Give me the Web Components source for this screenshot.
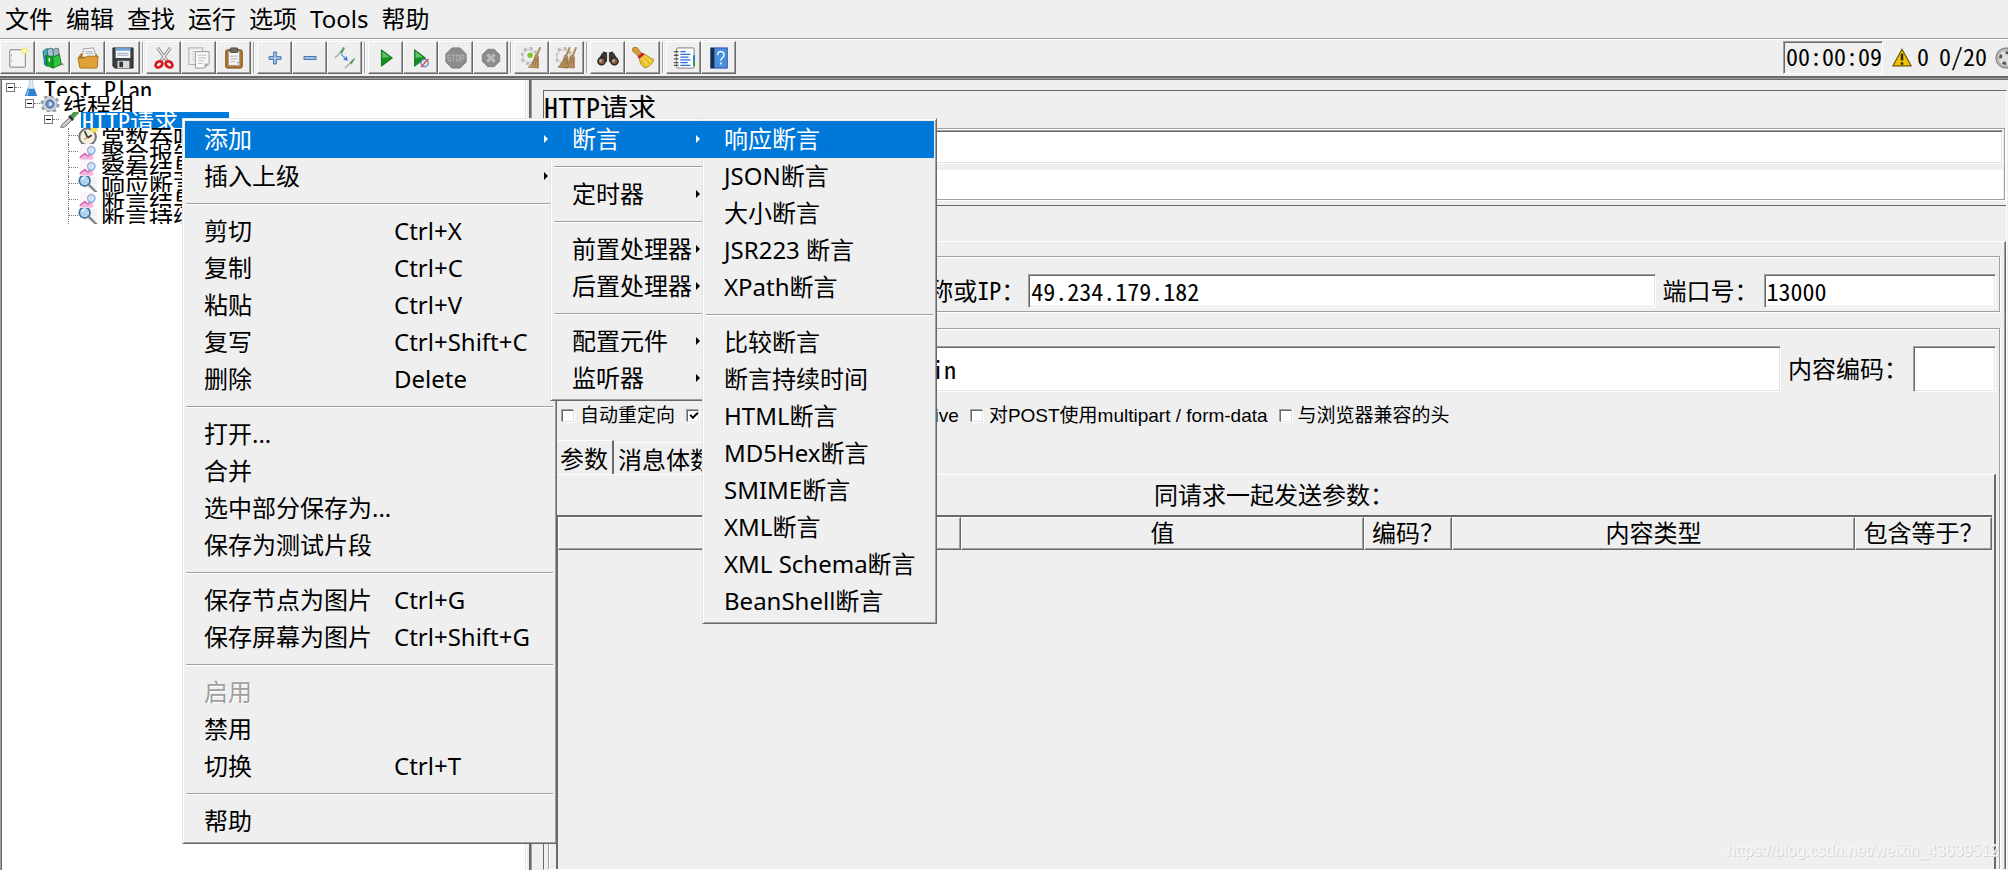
<!DOCTYPE html>
<html lang="zh-CN">
<head>
<meta charset="utf-8">
<title>JMeter</title>
<style>
  html, body { margin: 0; height: 100%; }
  body {
    background: #efefef; color: #000; overflow: hidden;
    --face: #efefef; --dark: #696969; --mid: #a0a0a0; --light: #e3e3e3; --sel: #0078d7;
    --ui: "Noto Sans", "Noto Sans CJK SC", sans-serif;
    --song: "Noto Sans Mono CJK SC", "Noto Sans CJK SC", "Liberation Mono", monospace;
    font: 24px/32px var(--ui);
  }
</style>
</head>
<body>
<jm-window></jm-window>
<script>
const define = (name, css, html, setup) => {
  customElements.define(name, class extends HTMLElement {
    connectedCallback() {
      if (this.shadowRoot) return;
      const root = this.attachShadow({ mode: 'open' });
      const t = document.createElement('template');
      t.innerHTML = `<style>*{box-sizing:border-box}${css}</style>` + (typeof html === 'function' ? html(this) : html);
      root.append(t.content.cloneNode(true));
      if (setup) setup(this, root);
    }
  });
};

const gear = (x, y, r, c, s) => `<g transform="translate(${x} ${y})"><circle r="${r}" fill="none" stroke="${s}" stroke-width="4" stroke-dasharray="${r*0.42} ${r*0.365}"/><circle r="${r-1}" fill="${c}" stroke="${s}"/></g>`;
const broom = '<path d="M20 0l2 .5-4 10-2-1z" fill="#b08a50"/><path d="M15.500 9l3.500 1.500 0 12.500-11-1c4-3 6-7 7.500-13z" fill="#c49a62" stroke="#8a6334" stroke-width=".7"/><path d="M16 11l-4 11M17 12l-2 10M18 12v10" stroke="#8a6334" stroke-width=".7"/>';
const ICONS = {
  new: '<rect x="3" y="3" width="17" height="19" rx="1" fill="#f4f4f4" stroke="#777"/><path d="M5 8v2M5 14v2" stroke="#999"/><circle cx="19" cy="4" r="3.500" fill="#f6ea70"/><circle cx="19" cy="4" r="1.500" fill="#fff"/>',
  templates: '<path d="M1 5q3-4 6-3l0 12-4 3z" fill="#4aa7b8" stroke="#1d6b80"/><path d="M6 3q3-3 6-1l1 7-7 3z" fill="#9fc4cb" stroke="#3b7078"/><path d="M12 3q3-3 6-1l1 8-6 3z" fill="#9fb4bb" stroke="#5b7078"/><path d="M2 9l4 2v11l-4-3z" fill="#2b7fa0"/><path d="M5 9l7 2v12l-7-3z" fill="#15a428" stroke="#0b7a1b"/><path d="M12 11l7-3 2 11-9 4z" fill="#2fc63c" stroke="#0b7a1b"/><path d="M8 12v4" stroke="#fff" stroke-width="1.500"/><path d="M20 20l4-1-3-2z" fill="#777"/>',
  open: '<path d="M2 10l2-3h4l14 1v13H3z" fill="#b87a1a"/><path d="M6 9l1-7 11-1 3 10H6z" fill="#f4f4f4" stroke="#999"/><path d="M9 5h8M9 7h9" stroke="#aaa"/><path d="M1 12h8l2-2h12l-1 12q0 1-1 1H4q-1 0-1-1z" fill="#e0a238" stroke="#a56b12"/>',
  save: '<path d="M1 1h22v22H3l-2-2z" fill="#3b3e42" stroke="#222"/><rect x="4" y="1" width="16" height="11" fill="#eef4fa"/><path d="M4 1h16v3H4z" fill="#6e9fd0"/><path d="M6 7h12M6 9h12" stroke="#9ab"/><rect x="6" y="15" width="13" height="8" fill="#d8d8d8"/><rect x="8" y="16" width="4" height="6" fill="#333"/>',
  cut: '<path d="M5 1l11 15M19 1L8 16" stroke="#888" stroke-width="3.500"/><path d="M5 1l11 15M19 1L8 16" stroke="#eee" stroke-width="1.500"/><ellipse cx="6.500" cy="19" rx="4" ry="3" fill="none" stroke="#d8181f" stroke-width="3" transform="rotate(-35 6.500 19)"/><ellipse cx="17.500" cy="19" rx="4" ry="3" fill="none" stroke="#d8181f" stroke-width="3" transform="rotate(35 17.500 19)"/>',
  copy: '<rect x="1" y="1" width="15" height="18" fill="#f2f2f2" stroke="#a5a5a5"/><path d="M4 5h9M4 8h3M4 11h3M4 14h3" stroke="#c8c8c8"/><path d="M8 5h15v13l-5 5H8z" fill="#f8f8f8" stroke="#929292"/><path d="M11 9h9M11 12h9M11 15h7M11 18h5" stroke="#bbb"/><path d="M18 23v-5h5z" fill="#aaa"/>',
  paste: '<rect x="3" y="3" width="18" height="20" rx="2" fill="#b87a2a" stroke="#6e4312"/><rect x="6" y="5" width="12" height="15" fill="#f6f6f4" stroke="#999"/><path d="M8 10h8M8 13h8M8 16h5" stroke="#aaa"/><rect x="8" y="1" width="8" height="5" rx="1" fill="#6b6b62" stroke="#444"/><path d="M18 20v-4h-4z" fill="#bbb"/>',
  plus: '<path d="M10.500 5.500h3v5h5v3h-5v5h-3v-5h-5v-3h5z" fill="#a8c8ec" stroke="#3268a8"/>',
  minus: '<rect x="5.500" y="10.500" width="13" height="3" fill="#a8c8ec" stroke="#3268a8"/>',
  toggle: '<path d="M1 12L8 5" stroke="#aaa" stroke-width="1.500"/><path d="M6 6l4-6 2 1-3 6z" fill="#5f9f63"/><path d="M12 23l7-7" stroke="#aaa" stroke-width="1.500"/><path d="M17 17l5-5 1 1-4 6z" fill="#5f9f63"/><path d="M8 8l5 5" fill="none" stroke="#2a78e0" stroke-width="1.500" stroke-dasharray="2 1"/><path d="M15 15l-5-1 4-4z" fill="#2a78e0"/>',
  start: '<path d="M7 3l12 9-12 9z" fill="#159024" stroke="#0d6d18"/><path d="M8 5l8 6-8 1z" fill="#5fc068"/>',
  startnp: '<path d="M5 3l12 9-12 9z" fill="#159024" stroke="#0d6d18"/><path d="M6 5l8 6-8 1z" fill="#5fc068"/><circle cx="16" cy="17.500" r="4" fill="#dde9f8" stroke="#6a8fc8" stroke-width="1.500"/><path d="M12 22l8-9" stroke="#e04030" stroke-width="1.500"/>',
  stop: '<path d="M7.500 1h9l6.500 6.500v9L16.500 23h-9L1 16.500v-9z" fill="#8c8c8c" stroke="#7a7a7a"/><path d="M6 9H3v3h3v3H3M7 9h4M9 9v6M12.500 9h3v6h-3zM17.500 15.500V9h3v3.500h-3" fill="none" stroke="#a9a9a9" stroke-width="1.500"/>',
  shutdown: '<path d="M8.500 2.500h7L21.500 8.500v7L15.500 21.500h-7L2.500 15.500v-7z" fill="#8c8c8c" stroke="#7f7f7f"/><path d="M8 8l8 8M16 8l-8 8" stroke="#b9b9b9" stroke-width="3.500"/>',
  clear: gear(9, 10, 8, '#eee', '#bcbcbc') + '<circle cx="10" cy="9" r="3" fill="#7cc828"/>' + broom,
  clearall: gear(8, 10, 8, '#eee', '#bcbcbc') + '<g transform="translate(-6)">' + broom + '</g><g transform="translate(1)">' + broom + '</g>',
  search: '<path d="M5 8l2-3 4 1v6H9zM19 8l-2-3-4 1v6h2z" fill="#333"/><path d="M1 15l4-8 6 3 0 6zM23 15l-4-8-6 3 0 6z" fill="#3a3a3a"/><circle cx="5" cy="15.500" r="4" fill="#8a5a3c" stroke="#222" stroke-width="1.500"/><circle cx="19" cy="15.500" r="4" fill="#8a5a3c" stroke="#222" stroke-width="1.500"/><circle cx="4" cy="15" r="1.500" fill="#c9b0a0"/><circle cx="18" cy="15" r="1.500" fill="#c9b0a0"/>',
  reset: '<path d="M1 1q3-2 5 0l5 7-3 3-7-6q-1-2 0-4z" fill="#d59a3a" stroke="#8f6218" stroke-width=".7"/><path d="M6 11l5-5 3 2-6 5z" fill="#c8202a"/><path d="M8 13l6-5q4 3 10 6-3 7-10 9-6-4-6-10z" fill="#f4cf3a" stroke="#a8861a"/><path d="M10 14l5 8M13 11l7 8" stroke="#c8a21e"/>',
  log: '<rect x="4" y="1" width="19" height="22" rx="1" fill="#fff" stroke="#777"/><path d="M8 5h6M8 8h11M8 11h9M8 14h11M8 17h8M8 20h11" stroke="#2a6fd8" stroke-width="1.500"/><path d="M1 5h5M1 9h5M1 13h5M1 17h5M1 20h5" stroke="#555" stroke-width="1.500"/><path d="M23 9v6" stroke="#2a6fd8" stroke-width="2"/><path d="M23 15v6" stroke="#18a030" stroke-width="2"/>',
  help: '<rect x="3" y="1" width="18" height="22" fill="#4a8fe0" stroke="#234f94"/><rect x="3" y="1" width="4" height="22" fill="#1c2f4a"/><path d="M10.500 9q0-4 3.500-4t3.500 3.500q0 2-2 3.500-1.500 1-1.500 3" fill="none" stroke="#fff" stroke-width="1.500"/><circle cx="14" cy="18" r="1.200" fill="#fff"/>',
  warn: '<path d="M12 1.500L23 21.500H1z" fill="#f5c400" stroke="#6b5a10" stroke-width="1.500"/><path d="M12 7v8M12 17v3" stroke="#332b00" stroke-width="3"/>',
  ring: '<circle cx="12" cy="12" r="11" fill="#b9b9b9" stroke="#6d6d6d"/><circle cx="12" cy="12" r="8" fill="#ddd"/><circle cx="12" cy="12" r="6" fill="none" stroke="#555" stroke-width="3" stroke-dasharray="4 5"/>',
  flask: '<path d="M10 1h4v7l5 13q0 2-2 2H7q-2 0-2-2l5-13z" fill="#dfe9f2" stroke="#b5c3d0"/><path d="M8 13h8l3 8q0 2-2 2H7q-2 0-2-2z" fill="#2f7fd0"/><path d="M9 15l-2 6" stroke="#9fd0ff" stroke-width="1.500"/>',
  cog: '<circle cx="12" cy="12" r="9.500" fill="none" stroke="#9ba1aa" stroke-width="4" stroke-dasharray="4 3.460"/><circle cx="12" cy="12" r="8.500" fill="#d8dce2" stroke="#9ba1aa"/><circle cx="12" cy="12" r="5" fill="#6f96cc" stroke="#3b4f78"/><path d="M11 9l4 3-4 3z" fill="#e8f2ff"/>',
  dropper: '<path d="M1 23l3-6 10-9 3 3-10 9z" fill="#c9cdd0" stroke="#555"/><path d="M12 7l5 5" stroke="#333" stroke-width="3"/><path d="M14 7l5-6q4-1 4 3l-6 6z" fill="#4aa04a" stroke="#2b6b2b"/>',
  timer: '<circle cx="11.500" cy="13" r="10" fill="#f3efdf" stroke="#76727e" stroke-width="2.500"/><path d="M11.500 14L8 6M11.500 14l5-3" stroke="#333" stroke-width="2"/><path d="M11.500 14l-4 2" stroke="#e0a040" stroke-width="2"/><circle cx="19.500" cy="4" r="4" fill="#f3e34a"/>',
  chart: '<path d="M2 0h17v24H2z" fill="#fdf5fa"/><path d="M2 21l6-6 4 3 6-6v9z" fill="#f3b5dc"/><path d="M2 19l6-5 4 3 5-5" fill="none" stroke="#cf4f9f" stroke-width="1.500"/><circle cx="16" cy="10" r="4.500" fill="#cfe6fa" stroke="#88a8cc" stroke-width="1.500"/>',
  lens: '<path d="M8 18h15V4H12z" fill="#f3f3f3"/><path d="M13 13l10 10" stroke="#888" stroke-width="3"/><circle cx="8" cy="8" r="6.500" fill="#a9d3f0" stroke="#3e7398" stroke-width="2"/><path d="M4.500 7q1-3 4-3" fill="none" stroke="#fff" stroke-width="1.500"/>'
};

define('jm-icon', ':host{display:block;width:24px;height:24px;flex:none}svg{display:block;width:100%;height:100%}',
  el => `<svg viewBox="0 0 24 24" aria-hidden="true">${ICONS[el.getAttribute('name')]}</svg>`);

define('jm-menubar', `
  :host{display:block;border-bottom:1px solid var(--mid);box-shadow:0 1px #fff;margin-bottom:1px}
  nav{display:flex;height:38px;align-items:center;gap:13px;padding-left:5px}
  button{all:unset;font:24px/32px var(--ui)}`,
  `<nav>${['文件','编辑','查找','运行','选项','Tools','帮助'].map(t => `<button>${t}</button>`).join('')}</nav>`);

define('jm-tool', `
  :host{display:block}
  button{display:grid;place-items:center;width:35px;height:33px;padding:0;background:var(--face);border:1px solid;
    border-color:#fff var(--dark) var(--dark) #fff;box-shadow:inset -1px -1px var(--mid)}
  jm-icon{width:22px;height:22px}`,
  el => `<button aria-label="${el.getAttribute('name')}"><jm-icon name="${el.getAttribute('name')}"></jm-icon></button>`);

define('jm-toolbar', `
  :host{display:flex;height:36px;padding-top:1px;align-items:flex-start;overflow:hidden}
  .g{display:flex}
  .g+.g{margin-left:6px;position:relative}
  .g+.g::before{content:"";position:absolute;left:-4px;top:1px;height:31px;width:2px;background:linear-gradient(90deg,var(--mid) 50%,#fff 50%)}
  .status{margin-left:auto;display:flex;align-items:center;height:33px;font:24px/28px var(--song)}
  .time{width:100px;height:33px;padding-left:2px;border:1px solid;border-color:var(--mid) #fff #fff var(--mid);box-shadow:inset 1px 1px var(--dark)}
  .status jm-icon{width:20px;height:20px;margin:0 5px 0 9px}
  .n{margin-right:10px}
  .n,.v{height:31px}
  .end{width:13px;height:22px;margin-left:8px;overflow:hidden}
  .end jm-icon{width:22px;height:22px;margin:0}`,
  [['new','templates','open','save'],['cut','copy','paste'],['plus','minus','toggle'],['start','startnp','stop','shutdown'],['clear','clearall'],['search','reset'],['log','help']]
    .map(g => `<div class="g">${g.map(n => `<jm-tool name="${n}"></jm-tool>`).join('')}</div>`).join('') +
  `<div class="status"><span class="time">00:00:09</span><jm-icon name="warn"></jm-icon><span class="n">0</span><span class="v">0/20</span><span class="end"><jm-icon name="ring"></jm-icon></span></div>`);

define('jm-node', `
  :host{display:flex;height:16px;overflow:hidden;padding-left:calc(4px + 19px * var(--level))}
  .x{width:15px;height:16px;flex:none;position:relative}
  .x.open::before{content:"";position:absolute;left:9px;right:0;top:7px;border-top:1px dotted #777}
  .x.leaf{margin-left:5px;width:10px;border-left:1px dotted #777}
  .x.leaf::before{content:"";position:absolute;left:0;right:0;top:7px;border-top:1px dotted #777}
  .box{position:absolute;left:0;top:3px;width:9px;height:9px;border:1px solid #777;background:linear-gradient(#000,#000) center/5px 1px no-repeat #fff}
  jm-icon{width:20px;height:20px;margin-top:-2px}
  .t{font:24px/17px var(--song);white-space:pre;margin-left:2px;padding:0 3px 0 1px;height:16px}
  :host([selected]) .t{background:var(--sel);color:#fff}`,
  el => `<span class="x ${el.hasAttribute('leaf') ? 'leaf' : 'open'}">${el.hasAttribute('leaf') ? '' : '<i class="box"></i>'}</span><jm-icon name="${el.getAttribute('icon')}"></jm-icon><span class="t"><slot></slot></span>`,
  el => el.style.setProperty('--level', el.getAttribute('level')));

define('jm-tree', `
  :host{display:block;background:#fff;border-left:1px solid var(--mid);box-shadow:inset 1px 0 var(--dark),1px 0 #fff;padding-left:1px;border-right:1px solid var(--light)}`,
  `<jm-node level="0" icon="flask">Test Plan</jm-node>
   <jm-node level="1" icon="cog">线程组</jm-node>
   <jm-node level="2" icon="dropper" selected>HTTP请求 one</jm-node>
   <jm-node level="3" leaf icon="timer">常数吞吐量定时器</jm-node>
   <jm-node level="3" leaf icon="chart">聚合报告</jm-node>
   <jm-node level="3" leaf icon="chart">察看结果树</jm-node>
   <jm-node level="3" leaf icon="lens">响应断言</jm-node>
   <jm-node level="3" leaf icon="chart">断言结果</jm-node>
   <jm-node level="3" leaf icon="lens">断言持续时间</jm-node>`);

define('jm-check', `
  :host{display:block}
  label{display:flex;align-items:center;gap:6px;font:19px/24px "Liberation Sans","Noto Sans CJK SC",sans-serif;white-space:nowrap}
  input{appearance:none;margin:0;width:12px;height:12px;background:#fff;border:1px solid;border-color:var(--dark) var(--light) var(--light) var(--dark);box-shadow:-1px -1px var(--mid),1px 1px #fff}
  input:checked{position:relative}
  input:checked::after{content:"";position:absolute;left:2px;top:1px;width:6px;height:3px;border:solid #000;border-width:0 0 2px 2px;transform:rotate(-45deg)}`,
  el => `<label><input type="checkbox" ${el.hasAttribute('checked') ? 'checked' : ''}><slot></slot></label>`);

define('jm-request', `
  :host{display:flex;flex-direction:column;border-left:2px solid var(--dark);box-shadow:inset 1px 0 var(--mid);padding:10px 1px 0 12px;font:24px/32px var(--song)}
  .frame{flex:1;display:flex;flex-direction:column;border:1px solid;border-color:var(--dark) #fff transparent var(--dark);min-width:0}
  h1{margin:0;font:400 28px/32px var(--song);height:37px}
  .etched{border:1px solid var(--mid);box-shadow:1px 1px #fff,inset 1px 1px #fff;min-width:0}
  input,select{font:24px/28px var(--song);color:#000;background:#fff;border:1px solid;border-radius:0;border-color:var(--mid) #fff #fff var(--mid);box-shadow:inset 1px 1px var(--dark),inset -1px -1px var(--light);padding:0 2px 2px;min-width:0;width:100%;height:34px;outline:0}
  label{white-space:nowrap}
  .names{margin:0 1px 0 4px;padding:1px 1px 0 1px;display:grid;grid-template-columns:80px 1fr;row-gap:6px}
  .names .plain{border:0;box-shadow:none;height:29px}
  .names label{line-height:29px}
  .main{flex:1;display:flex;flex-direction:column;border-top:1px solid var(--dark);margin-top:5px;padding-top:35px}
  .pane{flex:1;display:flex;flex-direction:column;border-top:1px solid #fff;border-right:1px solid var(--dark);box-shadow:inset -1px 0 var(--mid);padding:14px 5px 0 4px}
  .row{display:grid;align-items:center}
  .server{padding:17px 3px 3px 7px}
  .server .row{grid-template-columns:80px 190fr 202px 626fr 108px 232fr}
  .http{flex:1;display:flex;flex-direction:column;margin-top:16px;border-bottom:0;padding:17px 3px 0 7px}
  .http .row{grid-template-columns:80px 110px 87px 1fr 132px 83px}
  .http .row input,.http .row select{height:46px}
  .row label{padding:0 0 2px 7px}
  .checks{display:flex;gap:12px;margin:12px 0 13px 6px}
  .tabs{display:flex;height:33px;align-items:flex-end}
  .tabs button{all:unset;font:24px/28px var(--song);padding:0 4px;height:31px;border-top:1px solid #fff;border-right:1px solid var(--dark)}
  .tabs button:first-child{height:33px;border-right-width:2px}
  .params{flex:1;border-top:1px solid #fff;border-right:2px solid var(--dark);padding-right:2px;display:flex;flex-direction:column}
  .cap{line-height:32px;padding:3px 0 5px;text-align:center}
  .grid{flex:1;border-top:2px solid var(--dark);border-left:2px solid var(--dark)}
  table{width:100%;table-layout:fixed;border-collapse:separate;border-spacing:0}
  th{font:400 24px/26px var(--song);height:33px;padding:0 0 4px;border:1px solid;border-color:#fff var(--dark) var(--dark) #fff;box-shadow:inset -1px -1px var(--mid);white-space:nowrap}`,
  `<div class="frame">
    <h1>HTTP请求</h1>
    <div class="names etched"><label for="n">名称：</label><input id="n"><label for="c">注释：</label><input id="c" class="plain"></div>
    <div class="main"><div class="pane">
      <div class="server etched"><div class="row">
        <label for="pr">协议：</label><input id="pr"><label for="h">服务器名称或IP：</label><input id="h" value="49.234.179.182"><label for="po">端口号：</label><input id="po" value="13000"></div></div>
      <div class="http etched">
        <div class="row"><label for="m">方法：</label><select id="m"><option>POST</option></select><label for="pa">路径：</label><input id="pa" value="/api/login"><label for="en">内容编码：</label><input id="en"></div>
        <div class="checks"><jm-check>自动重定向</jm-check><jm-check checked>跟随重定向</jm-check><jm-check checked>使用 KeepAlive</jm-check><jm-check>对POST使用multipart / form-data</jm-check><jm-check>与浏览器兼容的头</jm-check></div>
        <div class="tabs"><button>参数</button><button>消息体数据</button></div>
        <div class="params"><div class="cap">同请求一起发送参数：</div>
          <div class="grid"><table><colgroup><col><col><col style="width:88px"><col><col style="width:137px"></colgroup>
          <thead><tr><th></th><th>值</th><th>编码？</th><th>内容类型</th><th>包含等于？</th></tr></thead></table></div></div>
      </div>
    </div></div>
  </div>`);

define('jm-item', `
  :host{display:block}
  button{all:unset;display:grid;grid-template-columns:var(--name-col,1fr) auto;width:100%;height:37px;padding-left:19px;box-sizing:border-box;font:24px/36px var(--ui);white-space:nowrap;position:relative}
  :host([active]) button{background:var(--sel);color:#fff}
  :host([disabled]) button{color:var(--mid);text-shadow:1px 1px #fff}
  :host([sub]) button::after{content:"";position:absolute;right:var(--arrow,5px);top:14px;border:4px solid transparent;border-left:4px solid;border-right:0}`,
  el => `<button ${el.hasAttribute('disabled') ? 'disabled' : ''}><span><slot></slot></span><span>${el.getAttribute('key') || ''}</span></button>`);

define('jm-menu', `
  :host{display:block;background:var(--face);border:1px solid;border-color:var(--light) var(--dark) var(--dark) var(--light);box-shadow:inset 1px 1px #fff,inset -1px -1px var(--mid);padding:2px 2px 3px}
  ::slotted(hr){margin:8px 1px;border:0;height:2px;background:linear-gradient(var(--mid) 50%,#fff 50%)}`,
  '<slot></slot>');

define('jm-window', `
  :host{display:flex;flex-direction:column;height:100vh;position:relative;overflow:hidden}
  .split{flex:1;display:flex;gap:4px;min-height:0;border-top:2px solid var(--dark);box-shadow:inset 0 1px var(--mid),inset 0 2px var(--dark);padding-top:2px}
  jm-tree{flex:0 0 526px;margin-right:-1px}
  jm-request{flex:1;min-width:0}
  jm-menu{position:absolute;top:118px}
  .a{left:182px;width:375px;--name-col:190px;--arrow:6px}
  .b{left:550px;width:156px;--arrow:3px}
  .c{left:702px;width:235px}
  .b jm-item[active],.c jm-item[active]{margin-left:-3px;padding-left:3px;background:var(--sel)}
  .mark{position:absolute;right:9px;bottom:9px;font:16px/20px "Liberation Sans",sans-serif;color:#f8f8f8;text-shadow:1px 1px #d4d4d4}`,
  `<jm-menubar></jm-menubar><jm-toolbar></jm-toolbar>
   <div class="split"><jm-tree></jm-tree><jm-request></jm-request></div>
   <jm-menu class="a"><jm-item active sub>添加</jm-item><jm-item sub>插入上级</jm-item><hr>
     <jm-item key="Ctrl+X">剪切</jm-item><jm-item key="Ctrl+C">复制</jm-item><jm-item key="Ctrl+V">粘贴</jm-item><jm-item key="Ctrl+Shift+C">复写</jm-item><jm-item key="Delete">删除</jm-item><hr>
     <jm-item>打开...</jm-item><jm-item>合并</jm-item><jm-item>选中部分保存为...</jm-item><jm-item>保存为测试片段</jm-item><hr>
     <jm-item key="Ctrl+G">保存节点为图片</jm-item><jm-item key="Ctrl+Shift+G">保存屏幕为图片</jm-item><hr>
     <jm-item disabled>启用</jm-item><jm-item>禁用</jm-item><jm-item key="Ctrl+T">切换</jm-item><hr><jm-item>帮助</jm-item></jm-menu>
   <jm-menu class="b"><jm-item active sub>断言</jm-item><hr><jm-item sub>定时器</jm-item><hr><jm-item sub>前置处理器</jm-item><jm-item sub>后置处理器</jm-item><hr><jm-item sub>配置元件</jm-item><jm-item sub>监听器</jm-item></jm-menu>
   <jm-menu class="c"><jm-item active>响应断言</jm-item><jm-item>JSON断言</jm-item><jm-item>大小断言</jm-item><jm-item>JSR223 断言</jm-item><jm-item>XPath断言</jm-item><hr>
     <jm-item>比较断言</jm-item><jm-item>断言持续时间</jm-item><jm-item>HTML断言</jm-item><jm-item>MD5Hex断言</jm-item><jm-item>SMIME断言</jm-item><jm-item>XML断言</jm-item><jm-item>XML Schema断言</jm-item><jm-item>BeanShell断言</jm-item></jm-menu>
   <span class="mark">https://blog.csdn.net/weixin_43639512</span>`);
</script>
</body>
</html>
